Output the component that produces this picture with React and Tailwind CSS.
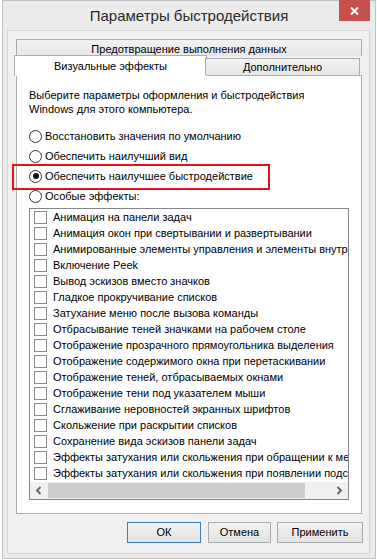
import React from 'react';

const effects = [
  'Анимация на панели задач',
  'Анимация окон при свертывании и развертывании',
  'Анимированные элементы управления и элементы внутри окна',
  'Включение Peek',
  'Вывод эскизов вместо значков',
  'Гладкое прокручивание списков',
  'Затухание меню после вызова команды',
  'Отбрасывание теней значками на рабочем столе',
  'Отображение прозрачного прямоугольника выделения',
  'Отображение содержимого окна при перетаскивании',
  'Отображение теней, отбрасываемых окнами',
  'Отображение тени под указателем мыши',
  'Сглаживание неровностей экранных шрифтов',
  'Скольжение при раскрытии списков',
  'Сохранение вида эскизов панели задач',
  'Эффекты затухания или скольжения при обращении к меню',
  'Эффекты затухания или скольжения при появлении подсказок',
];

const radios = [
  { label: 'Восстановить значения по умолчанию', checked: false },
  { label: 'Обеспечить наилучший вид', checked: false },
  { label: 'Обеспечить наилучшее быстродействие', checked: true },
  { label: 'Особые эффекты:', checked: false },
];

function Radio({ checked }) {
  return (
    <span className="flex h-[13px] w-[13px] shrink-0 items-center justify-center rounded-full border border-[#333] bg-white">
      {checked && <span className="h-[6px] w-[6px] rounded-full bg-[#111]" />}
    </span>
  );
}

function Chevron({ dir }) {
  return (
    <svg width="7" height="9" viewBox="0 0 7 9">
      <path
        d={dir === 'left' ? 'M5.5 1 L2 4.5 L5.5 8' : 'M1.5 1 L5 4.5 L1.5 8'}
        fill="none"
        stroke="#606060"
        strokeWidth="1.8"
      />
    </svg>
  );
}

export default function App() {
  return (
    <div className="relative h-[560px] w-[377px] overflow-hidden bg-white font-['Liberation_Sans',Arial,sans-serif] text-[11px] text-black">
      {/* Window frame */}
      <div className="ml-[2px] flex h-[559px] w-[374px] flex-col border border-[#c2c2c2] bg-[#ebebeb]">
        {/* Title bar */}
        <div className="flex h-[29px] items-center justify-center pt-[2px] text-[15px] text-[#2a2a2a]">
          Параметры быстродействия
        </div>

        {/* Client area */}
        <div className="ml-[4px] flex h-[524px] w-[363px] flex-col border border-[#d6d6d6] bg-[#f0f0f0]">
          {/* Tabs */}
          <div className="ml-[8px] mt-[8px] flex h-[17px] w-[346px] items-center justify-center border-x border-t border-[#adadad] bg-gradient-to-b from-[#f2f2f2] to-[#e6e6e6] pt-[2px]">
            Предотвращение выполнения данных
          </div>
          <div className="relative z-10 -mb-px ml-[6px] flex h-[20px] items-end">
            <div className="flex h-[21px] w-[193px] items-center justify-center border-x border-t border-[#adadad] bg-white">
              Визуальные эффекты
            </div>
            <div className="-ml-[2px] mb-px flex h-[17px] w-[155px] items-center justify-center border-x border-t border-[#adadad] bg-gradient-to-b from-[#f2f2f2] to-[#e6e6e6] pt-px">
              Дополнительно
            </div>
          </div>

          {/* Tab panel */}
          <div className="ml-[8px] flex h-[439px] w-[346px] flex-col border border-[#adadad] bg-white px-3 pt-[12px]">
            <p className="leading-[14px]">
              Выберите параметры оформления и быстродействия
              <br />
              Windows для этого компьютера.
            </p>

            <div className="mt-[10px] flex flex-col">
              {radios.map((r) => (
                <div key={r.label} className="flex h-[20px] items-center gap-[3px]">
                  <Radio checked={r.checked} />
                  <span>{r.label}</span>
                </div>
              ))}
            </div>

            {/* Effects list */}
            <div className="mt-[2px] flex h-[292px] w-[320px] flex-col border border-[#828790] bg-white">
              <div className="flex-1 overflow-hidden">
                {effects.map((e) => (
                  <div key={e} className="flex h-[16px] items-center gap-[6px] whitespace-nowrap pl-[4px]">
                    <span className="h-[13px] w-[13px] shrink-0 border border-[#8a8a8a] bg-white" />
                    <span>{e}</span>
                  </div>
                ))}
              </div>
              <div className="flex h-[17px] items-stretch bg-[#f0f0f0]">
                <div className="flex w-[17px] items-center justify-center">
                  <Chevron dir="left" />
                </div>
                <div className="my-px ml-px w-[257px] bg-[#cdcdcd]" />
                <div className="flex-1" />
                <div className="flex w-[17px] items-center justify-center">
                  <Chevron dir="right" />
                </div>
              </div>
            </div>
          </div>

          {/* Buttons */}
          <div className="mr-[6px] mt-[8px] flex justify-end">
            <button className="h-[21px] w-[74px] border border-[#3c7fb1] bg-gradient-to-b from-[#f2f2f2] to-[#e3e3e3]">
              ОК
            </button>
            <button className="ml-[7px] h-[21px] w-[63px] border border-[#acacac] bg-gradient-to-b from-[#f2f2f2] to-[#e3e3e3]">
              Отмена
            </button>
            <button className="ml-[6px] h-[21px] w-[86px] border border-[#acacac] bg-gradient-to-b from-[#f2f2f2] to-[#e3e3e3]">
              Применить
            </button>
          </div>
        </div>
      </div>

      {/* Close button */}
      <div className="absolute left-[339px] top-0 flex h-[21px] w-[31px] items-center justify-center bg-[#c75050]">
        <svg width="9" height="8" viewBox="0 0 9 8">
          <path d="M1 0.5 L8 7.5 M8 0.5 L1 7.5" stroke="#fff" strokeWidth="2" />
        </svg>
      </div>

      {/* Highlight annotation */}
      <div className="absolute left-[12px] top-[164px] h-[26px] w-[258px] border-2 border-[#e8101a]" />
    </div>
  );
}
